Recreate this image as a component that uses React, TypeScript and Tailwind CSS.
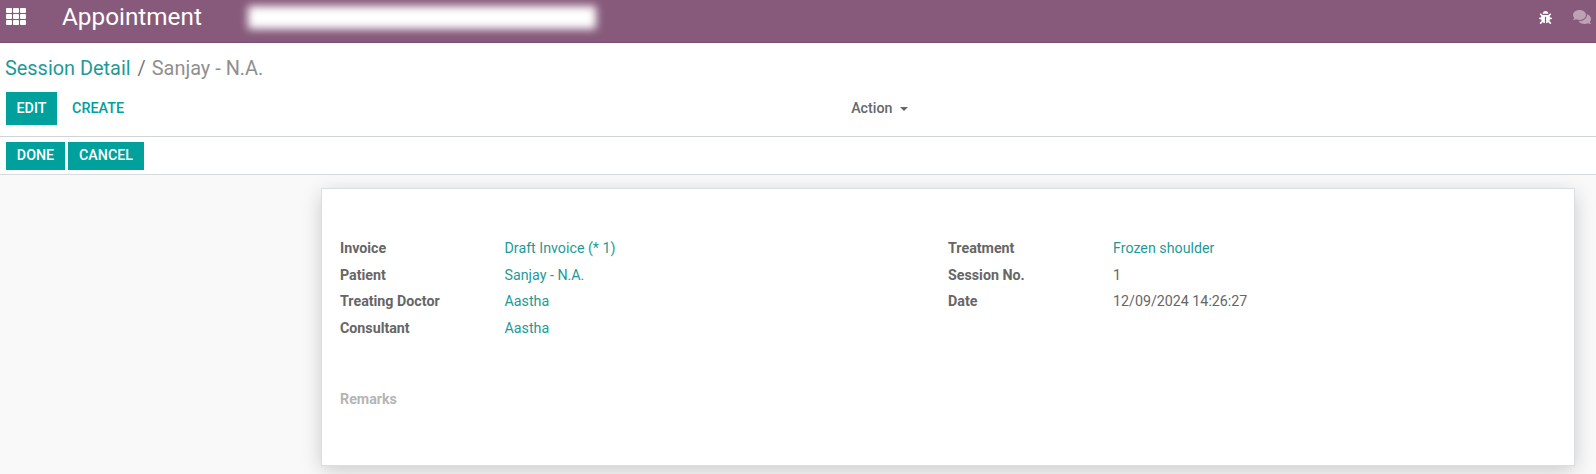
import { FaBug, FaComments } from 'react-icons/fa';

const leftFields = [
  { label: 'Invoice', value: 'Draft Invoice (* 1)', link: true },
  { label: 'Patient', value: 'Sanjay - N.A.', link: true },
  { label: 'Treating Doctor', value: 'Aastha', link: true },
  { label: 'Consultant', value: 'Aastha', link: true },
];

const rightFields = [
  { label: 'Treatment', value: 'Frozen shoulder', link: true },
  { label: 'Session No.', value: '1', link: false },
  { label: 'Date', value: '12/09/2024 14:26:27', link: false },
];

function AppsIcon() {
  return (
    <div className="grid grid-cols-3 gap-[1px] w-[20px]">
      {Array.from({ length: 9 }).map((_, i) => (
        <span key={i} className="h-[5px] bg-white rounded-[1px]" />
      ))}
    </div>
  );
}

function FieldGroup({ fields, labelWidth }: { fields: typeof leftFields; labelWidth: string }) {
  return (
    <div className="flex flex-col">
      {fields.map((f) => (
        <div key={f.label} className="flex h-[26.6px] items-center text-[14.25px]">
          <div className={`${labelWidth} font-bold text-[#666666]`}>{f.label}</div>
          <div className={f.link ? 'text-[#1d9a97]' : 'text-[#666666]'}>{f.value}</div>
        </div>
      ))}
    </div>
  );
}

export default function App() {
  return (
    <div className="h-[474px] overflow-hidden bg-[#f9f9f9] font-['Roboto',sans-serif] text-[14px]">
      <header className="h-[43px] bg-[#875a7b] border-b border-[#7a5170] flex items-start pl-[6px] pr-[5px]">
        <div className="mt-[8px]">
          <AppsIcon />
        </div>
        <span className="ml-[36px] mt-[3px] text-[24.3px] leading-[28px] text-white">Appointment</span>
        <div className="ml-[46px] mt-[6px] h-[23px] w-[348px] bg-white blur-[4px]" />
        <div className="ml-auto mt-[8px] flex items-center gap-[21px]">
          <FaBug className="text-white text-[13px]" />
          <FaComments className="text-[#ffffff70] text-[18px]" />
        </div>
      </header>

      <div className="bg-white border-b border-[#cfd4da] h-[94px] px-[6px]">
        <div className="pt-[12px] text-[19.9px] leading-[28px] -ml-px">
          <span className="text-[#1d9a97]">Session Detail</span>
          <span className="text-[#777777] ml-[7px] mr-[6px]">/</span>
          <span className="text-[#8f8f8f]">Sanjay - N.A.</span>
        </div>
        <div className="mt-[9px] flex items-center">
          <button className="h-[33px] w-[51px] bg-[#00a09d] text-white text-[14.25px] font-medium">EDIT</button>
          <button className="ml-[15px] text-[#00a09d] text-[14.4px] font-medium">CREATE</button>
          <div className="ml-[727px] flex items-center text-[#666666] text-[14.25px] font-medium">
            Action
            <span className="ml-[8px] border-x-[4px] border-t-[4px] border-x-transparent border-t-[#666666]" />
          </div>
        </div>
      </div>

      <div className="bg-white border-b border-[#d5dade] h-[38px] px-[6px] flex items-center gap-[3px]">
        <button className="h-[28px] w-[59px] bg-[#00a09d] text-white text-[14.25px] font-medium">DONE</button>
        <button className="h-[28px] w-[76px] bg-[#00a09d] text-white text-[14.25px] font-medium">CANCEL</button>
      </div>

      <div className="pl-[321px] pr-[21px] pt-[13px]">
        <div className="h-[278px] bg-white border border-[#d9dee3] shadow-[0_5px_20px_-1px_rgba(0,0,0,0.2)] pl-[18px] pt-[46.4px]">
          <div className="flex">
            <div className="w-[608px]">
              <FieldGroup fields={leftFields} labelWidth="w-[164.5px]" />
            </div>
            <FieldGroup fields={rightFields} labelWidth="w-[165px]" />
          </div>
          <div className="mt-[47.1px] text-[14.25px] font-bold text-[#b5b5b5]">Remarks</div>
        </div>
      </div>
    </div>
  );
}
